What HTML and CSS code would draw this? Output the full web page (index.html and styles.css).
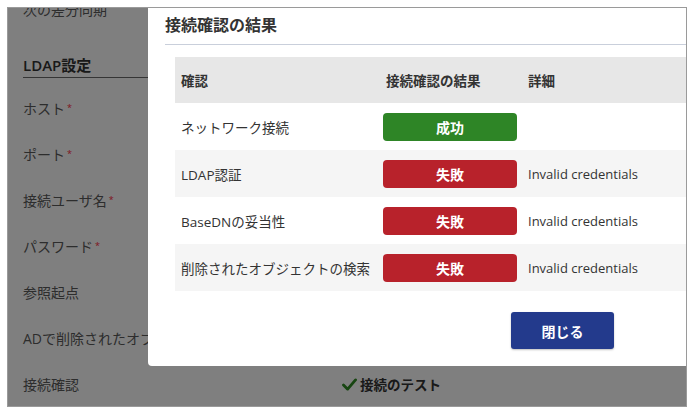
FILE: index.html
```html
<!DOCTYPE html>
<html lang="ja">
<head>
<meta charset="utf-8">
<link rel="stylesheet" href="styles.css">
</head>
<body>
<div class="frame">
  <div class="page">
    <div class="sync-row">次の差分同期</div>
    <h2 class="section-title">LDAP設定</h2>
    <div class="form">
      <div class="label">ホスト<span class="req">*</span></div><div class="value"></div>
      <div class="label">ポート<span class="req">*</span></div><div class="value"></div>
      <div class="label">接続ユーザ名<span class="req">*</span></div><div class="value"></div>
      <div class="label">パスワード<span class="req">*</span></div><div class="value"></div>
      <div class="label">参照起点</div><div class="value"></div>
      <div class="label">ADで削除されたオブジェクトの検索</div><div class="value"></div>
      <div class="label">接続確認</div>
      <div class="value test">
        <svg class="check" viewBox="0 0 16 14" width="15" height="13"><path d="M1.5 7.5 L6 12 L14.5 2" fill="none" stroke="#2e8a22" stroke-width="3" stroke-linecap="round" stroke-linejoin="round"/></svg>
        <span>接続のテスト</span>
      </div>
    </div>
  </div>
  <div class="overlay"></div>
  <div class="modal">
    <div class="modal-head">接続確認の結果</div>
    <table class="results">
      <thead>
        <tr><th class="c1">確認</th><th class="c2">接続確認の結果</th><th class="c3">詳細</th></tr>
      </thead>
      <tbody>
        <tr><td class="c1">ネットワーク接続</td><td class="c2"><span class="badge ok">成功</span></td><td class="c3"></td></tr>
        <tr><td class="c1">LDAP認証</td><td class="c2"><span class="badge ng">失敗</span></td><td class="c3">Invalid credentials</td></tr>
        <tr><td class="c1">BaseDNの妥当性</td><td class="c2"><span class="badge ng">失敗</span></td><td class="c3">Invalid credentials</td></tr>
        <tr><td class="c1">削除されたオブジェクトの検索</td><td class="c2"><span class="badge ng">失敗</span></td><td class="c3">Invalid credentials</td></tr>
      </tbody>
    </table>
    <div class="modal-foot">
      <button class="close-btn">閉じる</button>
    </div>
  </div>
</div>
</body>
</html>
```

FILE: styles.css
```css
html, body {
  margin: 0;
  padding: 0;
  background: #ffffff;
}
body {
  font-family: "Open Sans", "Noto Sans CJK JP", sans-serif;
  width: 695px;
  height: 417px;
  overflow: hidden;
}
.frame {
  position: relative;
  margin: 7px 0 0 7px;
  width: 678px;
  height: 398px;
  border: 1px solid #9a9a9a;
  overflow: hidden;
  background: #ffffff;
}
.page {
  padding-left: 15px;
  color: #5a5a5a;
  font-size: 14px;
}
.sync-row {
  margin-top: -21px;
  height: 46px;
  line-height: 46px;
}
.section-title {
  margin: 22px 0 0 0;
  font-size: 15px;
  font-weight: 600;
  line-height: 20px;
  padding-bottom: 2px;
  border-bottom: 1px solid #6a6a6a;
  color: #333;
}
.form {
  margin-top: 7px;
  display: grid;
  grid-template-columns: 319px 1fr;
  grid-auto-rows: 46px;
  align-items: center;
}
.label {
  white-space: nowrap;
}
.req {
  color: #ff2a3c;
  font-size: 9px;
  font-weight: 400;
  vertical-align: 3px;
  margin-left: 2px;
}
.test {
  display: flex;
  align-items: center;
  gap: 3px;
  font-size: 13.5px;
  font-weight: 700;
  color: #333;
}
.check {
  display: block;
}
.overlay {
  position: absolute;
  inset: 0;
  background: rgba(0, 0, 0, 0.5);
}
.modal {
  position: absolute;
  left: 140px;
  top: -16px;
  width: 620px;
  height: 374px;
  box-sizing: border-box;
  background: #ffffff;
  border-radius: 4px;
  padding-top: 23px;
}
.modal-head {
  margin-left: 17px;
  font-size: 16px;
  font-weight: 700;
  line-height: 20px;
  color: #333;
  padding-bottom: 9px;
  border-bottom: 1px solid #c9cfdb;
}
.results {
  margin: 12px 0 0 27px;
  border-collapse: collapse;
  width: 560px;
  font-size: 13px;
  color: #333;
}
.results th {
  height: 46px;
  padding: 0;
  text-align: left;
  font-weight: 700;
  font-size: 13.5px;
  background: #e7e7e7;
}
.results td {
  height: 47px;
  padding: 0;
}
.results tbody tr:nth-child(even) td {
  background: #f5f5f5;
}
.results .c1 {
  width: 202px;
  padding-left: 6px;
  white-space: nowrap;
}
.results td.c1 {
  font-size: 13.5px;
}
.results .c2 {
  width: 134px;
}
.results th.c2 {
  padding-left: 3px;
}
.results .c3 {
  padding-left: 8px;
  white-space: nowrap;
}
.results th.c3 {
  padding-left: 8px;
}
.badge {
  display: flex;
  align-items: center;
  justify-content: center;
  width: 134px;
  height: 28px;
  border-radius: 4px;
  color: #ffffff;
  font-weight: 700;
  font-size: 14px;
  margin-top: 1px;
}
.badge.ok {
  background: #2e8526;
}
.badge.ng {
  background: #b8222b;
}
.modal-foot {
  margin-top: 21px;
  padding-left: 363px;
}
.close-btn {
  width: 103px;
  height: 37px;
  border: none;
  border-radius: 3px;
  background: #233a8c;
  color: #ffffff;
  font-family: "Open Sans", "Noto Sans CJK JP", sans-serif;
  font-size: 14px;
  font-weight: 700;
  box-shadow: 0 1px 2px rgba(0, 0, 0, 0.25);
}
```
